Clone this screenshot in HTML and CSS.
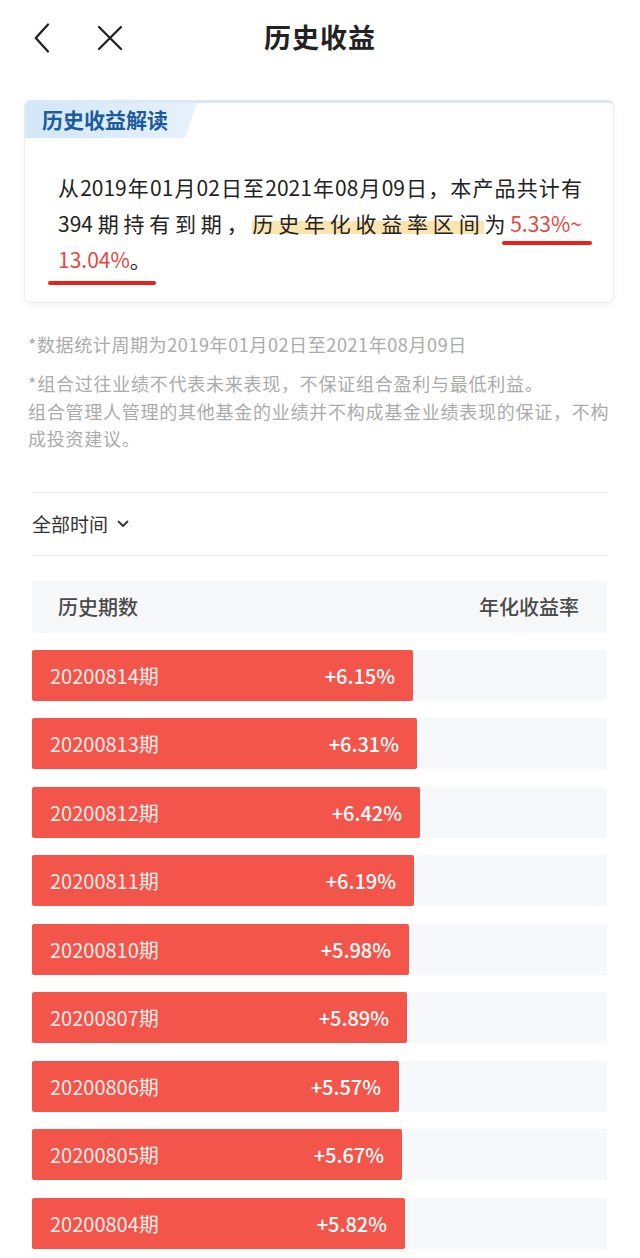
FILE: index.html
```html
<!DOCTYPE html>
<html lang="zh-CN">
<head>
<meta charset="utf-8">
<title>历史收益</title>
<link rel="stylesheet" href="styles.css">
</head>
<body>
<header class="topbar">
  <div class="nav">
    <svg class="icon-back" width="16" height="30" viewBox="0 0 16 30" aria-hidden="true"><polyline points="14,1.5 1.8,15 14,28.5" fill="none" stroke="#222" stroke-width="2.3" stroke-linecap="round" stroke-linejoin="round"/></svg>
    <svg class="icon-close" width="26" height="26" viewBox="0 0 26 26" aria-hidden="true"><path d="M2 2 L24 24 M24 2 L2 24" fill="none" stroke="#222" stroke-width="2.3" stroke-linecap="round"/></svg>
  </div>
  <h1 class="title">历史收益</h1>
  <div></div>
</header>

<section class="card">
  <div class="tag">历史收益解读</div>
  <div class="summary">
    <span class="line">从2019年01月02日至2021年08月09日，本产品共计有</span>
    <span class="line">394期持有到期，<span class="hl">历史年化收益率区间</span>为<span class="rate u1">5.33%~</span></span>
    <span class="line last"><span class="u2"><span class="rate">13.04%</span>。</span></span>
  </div>
</section>

<div class="notes">
  <p class="note-first">*数据统计周期为2019年01月02日至2021年08月09日</p>
  <p class="note-second">*组合过往业绩不代表未来表现，不保证组合盈利与最低利益。<br>组合管理人管理的其他基金的业绩并不构成基金业绩表现的保证，不构成投资建议。</p>
</div>

<div class="filter">
  <span>全部时间</span>
  <svg width="12" height="8" viewBox="0 0 12 8" aria-hidden="true"><polyline points="1.5,1.5 6,6 10.5,1.5" fill="none" stroke="#333" stroke-width="1.8" stroke-linecap="round" stroke-linejoin="round"/></svg>
</div>

<section class="table">
  <div class="thead">
    <span>历史期数</span>
    <span>年化收益率</span>
  </div>
  <div class="rows">
    <div class="row"><div class="bar" style="width:381px"><span class="period">20200814期</span><span class="value">+6.15%</span></div></div>
    <div class="row"><div class="bar" style="width:385px"><span class="period">20200813期</span><span class="value">+6.31%</span></div></div>
    <div class="row"><div class="bar" style="width:388px"><span class="period">20200812期</span><span class="value">+6.42%</span></div></div>
    <div class="row"><div class="bar" style="width:382px"><span class="period">20200811期</span><span class="value">+6.19%</span></div></div>
    <div class="row"><div class="bar" style="width:377px"><span class="period">20200810期</span><span class="value">+5.98%</span></div></div>
    <div class="row"><div class="bar" style="width:375px"><span class="period">20200807期</span><span class="value">+5.89%</span></div></div>
    <div class="row"><div class="bar" style="width:367px"><span class="period">20200806期</span><span class="value">+5.57%</span></div></div>
    <div class="row"><div class="bar" style="width:370px"><span class="period">20200805期</span><span class="value">+5.67%</span></div></div>
    <div class="row"><div class="bar" style="width:373px"><span class="period">20200804期</span><span class="value">+5.82%</span></div></div>
  </div>
</section>
</body>
</html>
```

FILE: styles.css
```css
html, body {
  margin: 0;
  padding: 0;
  background: #fff;
}
body {
  font-family: "Noto Sans CJK SC", "Noto Sans", sans-serif;
  color: #222;
}

/* top bar */
.topbar {
  height: 76px;
  display: grid;
  grid-template-columns: 1fr auto 1fr;
  align-items: center;
}
.nav {
  display: flex;
  align-items: center;
  padding-left: 34px;
  gap: 47px;
}
.nav svg { display: block; }
.title {
  margin: 0 0 3px;
  font-size: 27px;
  font-weight: 700;
  letter-spacing: 1px;
  color: #222;
}

/* summary card */
.card {
  margin: 24px 26px 0 24px;
  border: 1px solid #ededed;
  border-top: 3px solid #dce8f5;
  border-radius: 6px;
  box-shadow: 0 2px 6px rgba(0, 0, 0, 0.05);
  overflow: hidden;
  padding-bottom: 25px;
}
.tag {
  display: inline-block;
  height: 35px;
  line-height: 33px;
  padding: 0 29px 0 17px;
  font-size: 21px;
  font-weight: 700;
  color: #1d5c9c;
  background: linear-gradient(90deg, #d2e7f8, #e6f1fb);
  clip-path: polygon(0 0, 100% 0, calc(100% - 12px) 100%, 0 100%);
}
.summary {
  position: relative;
  margin: 31px 31px 0 33px;
  font-size: 21px;
  line-height: 36px;
  color: #222;
}
.summary::before {
  content: "";
  position: absolute;
  left: -10px;
  top: 3px;
  width: 26px;
  height: 20px;
  border-radius: 3px;
  background: #f2f4f9;
  z-index: -1;
}
.line {
  display: block;
  text-align: justify;
  text-align-last: justify;
}
.line.last {
  text-align-last: left;
}
.hl {
  background: linear-gradient(transparent 42%, #fbe4ae 42%, #fbe4ae 88%, transparent 88%);
}
.rate {
  color: #e5483e;
}
.u1, .u2 {
  position: relative;
}
.u1::after, .u2::after {
  content: "";
  position: absolute;
  height: 4px;
  border-radius: 2px;
  background: #e3231c;
}
.u1::after {
  left: -8px;
  right: -10px;
  top: calc(100% + 3px);
}
.u2::after {
  left: -10px;
  right: -5px;
  top: calc(100% + 7px);
}

/* notes */
.notes {
  margin: 27px 0 0 28px;
  width: 584px;
  font-size: 18px;
  color: #ababab;
  letter-spacing: 0.6px;
}
.notes p { margin: 0; }
.note-first { line-height: 28px; }
.note-second {
  margin-top: 12px !important;
  line-height: 27.5px;
  letter-spacing: 0.75px;
}

/* filter */
.filter {
  margin: 39px 33px 0 32px;
  height: 62px;
  border-top: 1px solid #eeeeee;
  border-bottom: 1px solid #eeeeee;
  display: flex;
  align-items: center;
  gap: 9px;
  font-size: 19px;
  color: #333;
}
.filter svg { display: block; margin-top: 1px; }

/* table */
.table {
  margin: 25px 33px 0 32px;
}
.thead {
  height: 52px;
  background: #f7f8fa;
  padding: 0 28px 0 26px;
  display: flex;
  align-items: center;
  justify-content: space-between;
  font-size: 20px;
  font-weight: 500;
  color: #4a4a4a;
}
.rows {
  margin-top: 17px;
  display: flex;
  flex-direction: column;
  gap: 17.5px;
}
.row {
  height: 51px;
  background: #f6f8fb;
  border-radius: 2px;
  display: flex;
}
.bar {
  height: 100%;
  box-sizing: border-box;
  background: #f4554a;
  border-radius: 2px;
  padding: 0 18px;
  display: flex;
  align-items: center;
  justify-content: space-between;
  font-size: 20px;
  color: #fff;
}
.period {
  color: rgba(255, 255, 255, 0.93);
}
.value {
  font-weight: 500;
}
```
